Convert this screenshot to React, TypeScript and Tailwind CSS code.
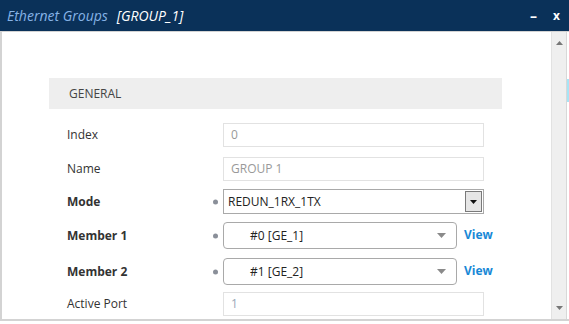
import React from "react";

function Dot() {
  return <span className="absolute left-[164px] top-1/2 -translate-y-1/2 w-[5px] h-[5px] rounded-full bg-[#8a8f99]" />;
}

export default function App() {
  return (
    <div className="w-[569px] h-[324px] bg-white overflow-hidden flex flex-col" style={{ fontFamily: '"Open Sans", sans-serif' }}>
      <div className="h-[31px] shrink-0 bg-[#0a3159] flex items-center pl-[7px] pr-[9px]">
        <span className="italic text-[14px] text-[#86b3e6]">Ethernet Groups</span>
        <span className="italic text-[14px] text-white ml-[9px]">[GROUP_1]</span>
        <span className="ml-auto text-white text-[14px] font-bold leading-none">–</span>
        <span className="ml-[16px] text-white text-[12px] font-bold leading-none">x</span>
      </div>
      <div className="h-[290px] shrink-0 flex border-l-2 border-b-2 border-t border-[#d3d3d3]">
        <div className="flex-1 flex flex-col pl-[47px] pt-[46px] text-[12px] text-[#333]">
          <div className="w-[453px] h-[31px] bg-[#eeeeee] flex items-center pl-[20px] text-[#444]">GENERAL</div>

          <div className="relative flex items-center mt-[14px] h-[24px]">
            <span className="w-[174px] shrink-0 pl-[18px]">Index</span>
            <div className="w-[261px] h-[24px] border border-[#e2e2e2] flex items-center pl-[7px] text-[#999]">0</div>
          </div>

          <div className="relative flex items-center mt-[10px] h-[24px]">
            <span className="w-[174px] shrink-0 pl-[18px]">Name</span>
            <div className="w-[261px] h-[24px] border border-[#e2e2e2] flex items-center pl-[7px] text-[#999]">GROUP 1</div>
          </div>

          <div className="relative flex items-center mt-[8px] h-[25px]">
            <span className="w-[174px] shrink-0 pl-[18px] font-bold">Mode</span>
            <Dot />
            <div className="w-[261px] h-[25px] border border-[#a9a9a9] flex items-center pl-[4px] text-[#222]">
              <span className="flex-1">REDUN_1RX_1TX</span>
              <div className="w-[17px] h-[21px] mr-[1px] bg-[#e6e6e6] border border-[#7a7a7a] flex items-center justify-center">
                <svg width="7" height="4" viewBox="0 0 7 4"><path d="M0 0h7L3.5 4z" fill="#111" /></svg>
              </div>
            </div>
          </div>

          <div className="relative flex items-center mt-[8px] h-[27px]">
            <span className="w-[174px] shrink-0 pl-[18px] font-bold">Member 1</span>
            <Dot />
            <div className="w-[234px] h-[27px] border border-[#a9a9a9] rounded-[4px] flex items-center pl-[26px] pr-[10px] text-[#222]">
              <span className="flex-1">#0 [GE_1]</span>
              <svg width="9" height="5" viewBox="0 0 9 5"><path d="M0 0h9L4.5 5z" fill="#8a8a8a" /></svg>
            </div>
            <span className="ml-[7px] -mt-[2px] text-[#1888d6] font-bold">View</span>
          </div>

          <div className="relative flex items-center mt-[9px] h-[27px]">
            <span className="w-[174px] shrink-0 pl-[18px] font-bold">Member 2</span>
            <Dot />
            <div className="w-[234px] h-[27px] border border-[#a9a9a9] rounded-[4px] flex items-center pl-[26px] pr-[10px] text-[#222]">
              <span className="flex-1">#1 [GE_2]</span>
              <svg width="9" height="5" viewBox="0 0 9 5"><path d="M0 0h9L4.5 5z" fill="#8a8a8a" /></svg>
            </div>
            <span className="ml-[7px] -mt-[2px] text-[#1888d6] font-bold">View</span>
          </div>

          <div className="relative flex items-center mt-[7px] h-[24px]">
            <span className="w-[174px] shrink-0 pl-[18px]">Active Port</span>
            <div className="w-[261px] h-[24px] border border-[#e2e2e2] flex items-center pl-[7px] text-[#9aa7b8]">1</div>
          </div>
        </div>
        <div className="w-[15px] bg-[#efefef] border-l border-[#e2e2e2] flex flex-col items-center justify-between pt-[9px] pb-[9px]">
          <svg width="7" height="4" viewBox="0 0 7 4"><path d="M0 4h7L3.5 0z" fill="#777" /></svg>
          <svg width="7" height="4" viewBox="0 0 7 4"><path d="M0 0h7L3.5 4z" fill="#777" /></svg>
        </div>
        <div className="w-[3px] border-l border-[#d8d8d8] flex flex-col">
          <div className="h-[47px]" />
          <div className="h-[23px] bg-[#a8e4f5]" />
        </div>
      </div>
    </div>
  );
}
